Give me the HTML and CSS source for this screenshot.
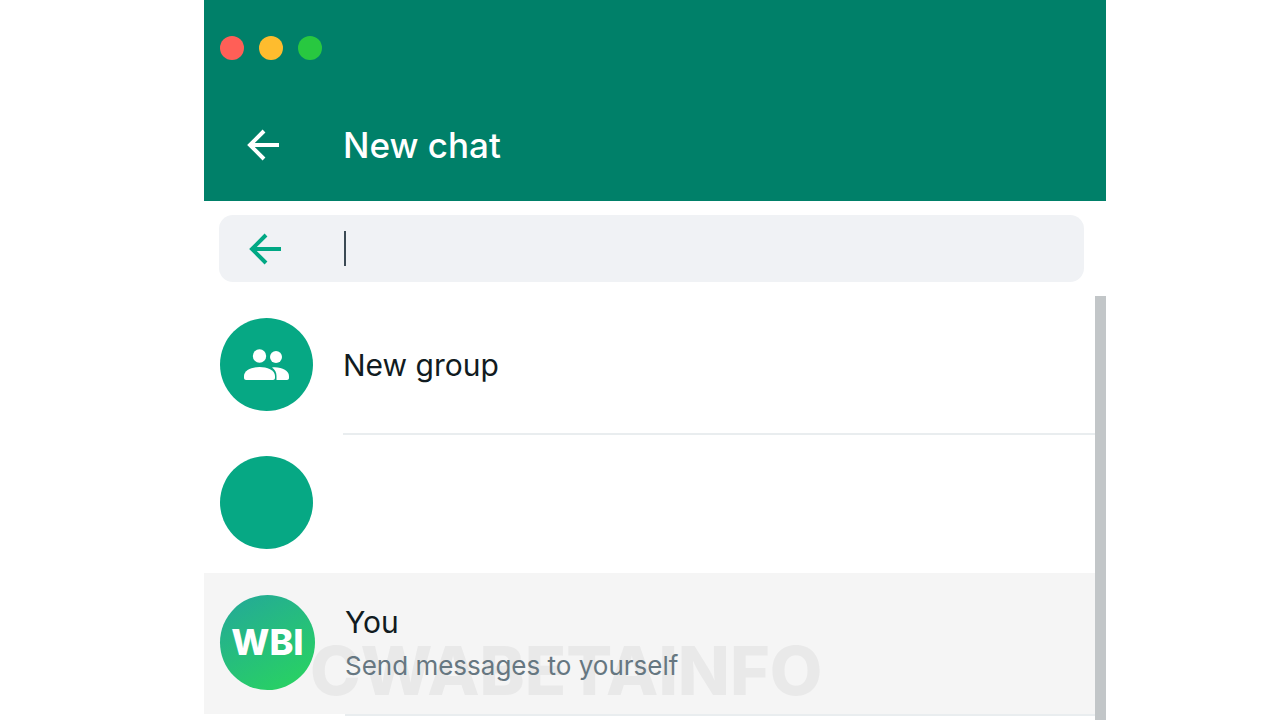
FILE: index.html
```
<!DOCTYPE html>
<html lang="en">
<head>
    <meta charset="UTF-8">
    <meta name="viewport" content="width=device-width, initial-scale=1.0">
    <title>New chat</title>
    <link rel="stylesheet" href="styles.css">
</head>
<body>
    <main class="window">
        <header class="header">
            <div class="dots">
                <span class="dot red"></span>
                <span class="dot yellow"></span>
                <span class="dot green"></span>
            </div>
            <div class="title-row">
                <button class="back" aria-label="Back">
                    <svg viewBox="0 0 32 32" width="32" height="32"><path d="M17 2L3 16l14 14M3 16h29"/></svg>
                </button>
                <h1>New chat</h1>
            </div>
        </header>
        <div class="search">
            <button class="back" aria-label="Close search">
                <svg viewBox="0 0 32 32" width="32" height="32"><path d="M17 2L3 16l14 14M3 16h29"/></svg>
            </button>
            <span class="caret"></span>
            <input type="text" class="search-input" aria-label="Search contacts">
        </div>
        <div class="content">
            <ul class="list">
                <li class="row">
                    <span class="avatar">
                        <svg viewBox="0 0 46 32" width="46" height="32">
                            <circle cx="15.5" cy="7" r="6.7"/>
                            <circle cx="32" cy="8" r="6"/>
                            <path d="M0 27c0-6 8-9 15.500-9s15.500 3 15.500 9v2c0 1-1 2-2 2H2c-1 0-2-1-2-2z"/>
                            <path d="M28 18.500c9-1 17 3 17 8.500v2c0 1-1 2-2 2H32.500v-4c0-3.500-1.500-6.500-4.500-8.500z"/>
                        </svg>
                    </span>
                    <div class="info line">
                        <p class="name">New group</p>
                    </div>
                </li>
                <li class="row">
                    <span class="avatar"></span>
                    <div class="info"></div>
                </li>
                <li class="row selected">
                    <span class="avatar wbi">WBI</span>
                    <div class="info">
                        <span class="watermark">CWABETAINFO</span>
                        <p class="name">You</p>
                        <p class="status">Send messages to yourself</p>
                    </div>
                </li>
                <li class="row next">
                    <div class="info"></div>
                </li>
            </ul>
            <div class="scrollbar"></div>
        </div>
    </main>
</body>
</html>
```
FILE: styles.css
```
*{
    margin: 0;
    padding: 0;
    box-sizing: border-box;
}
body{
    background: #fff;
    color: #111b21;
    font-family: Inter, "Liberation Sans", sans-serif;
}
.window{
    height: 100vh;
    margin: 0 174px 0 204px;
    display: flex;
    flex-direction: column;
    overflow: hidden;
}
.header{
    background: #008069;
    padding: 36px 16px 32px;
}
.dots{
    display: flex;
    gap: 15px;
}
.dot{
    width: 24px;
    height: 24px;
    border-radius: 50%;
}
.red{
    background: #ff5f57;
}
.yellow{
    background: #febc2e;
}
.green{
    background: #28c840;
}
.title-row{
    display: flex;
    align-items: center;
    gap: 64px;
    margin-top: 61px;
    padding-left: 27px;
    color: #fff;
}
h1{
    font-size: 35px;
    line-height: 48px;
    font-weight: 500;
}
.back{
    display: flex;
    border: none;
    background: none;
    color: inherit;
}
.back svg{
    fill: none;
    stroke: currentColor;
    stroke-width: 4;
}
.search{
    display: flex;
    align-items: center;
    height: 67px;
    flex-shrink: 0;
    margin: 14px 22px 14px 15px;
    padding: 0 30px;
    border-radius: 14px;
    background: #f0f2f5;
    color: #00a884;
}
.caret{
    width: 2px;
    height: 35px;
    margin-left: 63px;
    background: #3b4a54;
}
.search-input{
    flex: 1;
    border: none;
    outline: none;
    background: none;
    font: inherit;
    font-size: 30px;
}
.content{
    flex: 1;
    display: flex;
    min-height: 0;
}
.list{
    flex: 1;
    padding-top: 1px;
    list-style: none;
    overflow: hidden;
}
.row{
    display: flex;
    align-items: center;
    height: 138px;
    padding-left: 16px;
    gap: 30px;
}
.avatar{
    display: flex;
    align-items: center;
    justify-content: center;
    width: 93px;
    height: 93px;
    flex-shrink: 0;
    margin-bottom: 3px;
    border-radius: 50%;
    background: #06a884;
}
.avatar svg{
    fill: #fff;
}
.info{
    flex: 1;
    height: 100%;
    display: flex;
    flex-direction: column;
    justify-content: center;
}
.line{
    border-bottom: 2px solid #e9edef;
}
.name{
    font-size: 30px;
    line-height: 44px;
}
.status{
    font-size: 26px;
    line-height: 44px;
    color: #667781;
}
.selected{
    height: 141px;
    background: #f5f5f5;
}
.selected .info{
    position: relative;
}
.selected .name,
.selected .status{
    position: relative;
}
.wbi{
    width: 95px;
    height: 95px;
    background: linear-gradient(150deg, #24ac94 10%, #28cf66 85%);
    color: #fff;
    font-size: 36px;
    font-weight: 800;
}
/* sits behind the name and status */
.watermark{
    position: absolute;
    left: -35px;
    bottom: 8px;
    font-size: 68px;
    line-height: 72px;
    font-weight: 800;
    color: #e9e9e9;
}
.next{
    padding-left: 141px;
}
.next .info{
    border-top: 2px solid #e9edef;
}
.scrollbar{
    width: 11px;
    background: #c2c6c8;
}
```
